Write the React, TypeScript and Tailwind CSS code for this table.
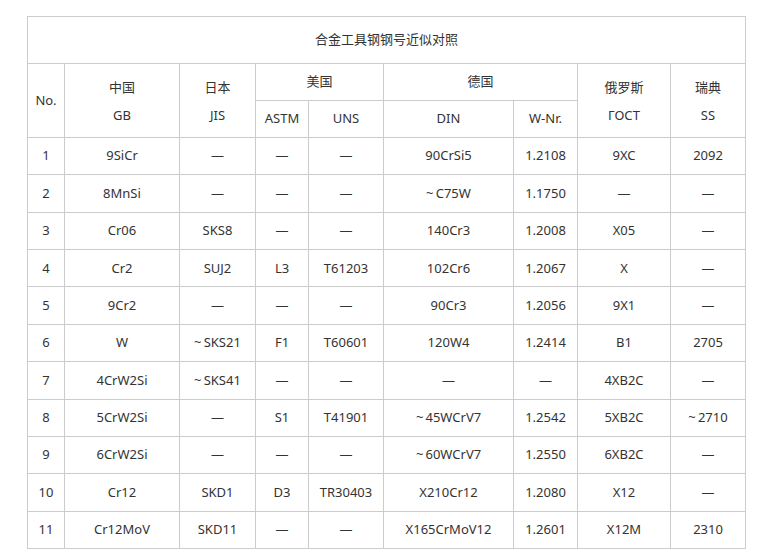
const T = '~\u2009'

const rows: string[][] = [
  ['1', '9SiCr', '—', '—', '—', '90CrSi5', '1.2108', '9XC', '2092'],
  ['2', '8MnSi', '—', '—', '—', T + 'C75W', '1.1750', '—', '—'],
  ['3', 'Cr06', 'SKS8', '—', '—', '140Cr3', '1.2008', 'X05', '—'],
  ['4', 'Cr2', 'SUJ2', 'L3', 'T61203', '102Cr6', '1.2067', 'X', '—'],
  ['5', '9Cr2', '—', '—', '—', '90Cr3', '1.2056', '9X1', '—'],
  ['6', 'W', T + 'SKS21', 'F1', 'T60601', '120W4', '1.2414', 'B1', '2705'],
  ['7', '4CrW2Si', T + 'SKS41', '—', '—', '—', '—', '4XB2C', '—'],
  ['8', '5CrW2Si', '—', 'S1', 'T41901', T + '45WCrV7', '1.2542', '5XB2C', T + '2710'],
  ['9', '6CrW2Si', '—', '—', '—', T + '60WCrV7', '1.2550', '6XB2C', '—'],
  ['10', 'Cr12', 'SKD1', 'D3', 'TR30403', 'X210Cr12', '1.2080', 'X12', '—'],
  ['11', 'Cr12MoV', 'SKD11', '—', '—', 'X165CrMoV12', '1.2601', 'X12M', '2310'],
]

const widths = [37, 115, 76, 53, 75, 130, 64, 93, 75]

const cell = 'border border-[#cccccc] text-center align-middle font-normal p-0'

export default function App() {
  return (
    <div
      className="min-h-screen bg-white pt-4 pl-[27px] text-[13px] text-[#333333]"
      style={{ fontFamily: '"Noto Sans", "Noto Sans CJK SC", sans-serif' }}
    >
      <table className="table-fixed border-collapse w-[718px]">
        <colgroup>
          {widths.map((w, i) => (
            <col key={i} style={{ width: w }} />
          ))}
        </colgroup>
        <thead>
          <tr className="h-[47px]">
            <th colSpan={9} className={cell}>
              合金工具钢钢号近似对照
            </th>
          </tr>
          <tr className="h-[37px]">
            <th rowSpan={2} className={cell}>
              No.
            </th>
            <th rowSpan={2} className={`${cell} leading-[28px]`}>
              中国<br />GB
            </th>
            <th rowSpan={2} className={`${cell} leading-[28px]`}>
              日本<br />JIS
            </th>
            <th colSpan={2} className={cell}>
              美国
            </th>
            <th colSpan={2} className={cell}>
              德国
            </th>
            <th rowSpan={2} className={`${cell} leading-[28px]`}>
              俄罗斯<br />ГОСТ
            </th>
            <th rowSpan={2} className={`${cell} leading-[28px]`}>
              瑞典<br />SS
            </th>
          </tr>
          <tr className="h-[37px]">
            <th className={cell}>ASTM</th>
            <th className={cell}>UNS</th>
            <th className={cell}>DIN</th>
            <th className={cell}>W-Nr.</th>
          </tr>
        </thead>
        <tbody>
          {rows.map((r) => (
            <tr key={r[0]} className="h-[37.36px]">
              {r.map((v, i) => (
                <td key={i} className={cell}>
                  {v}
                </td>
              ))}
            </tr>
          ))}
        </tbody>
      </table>
    </div>
  )
}
